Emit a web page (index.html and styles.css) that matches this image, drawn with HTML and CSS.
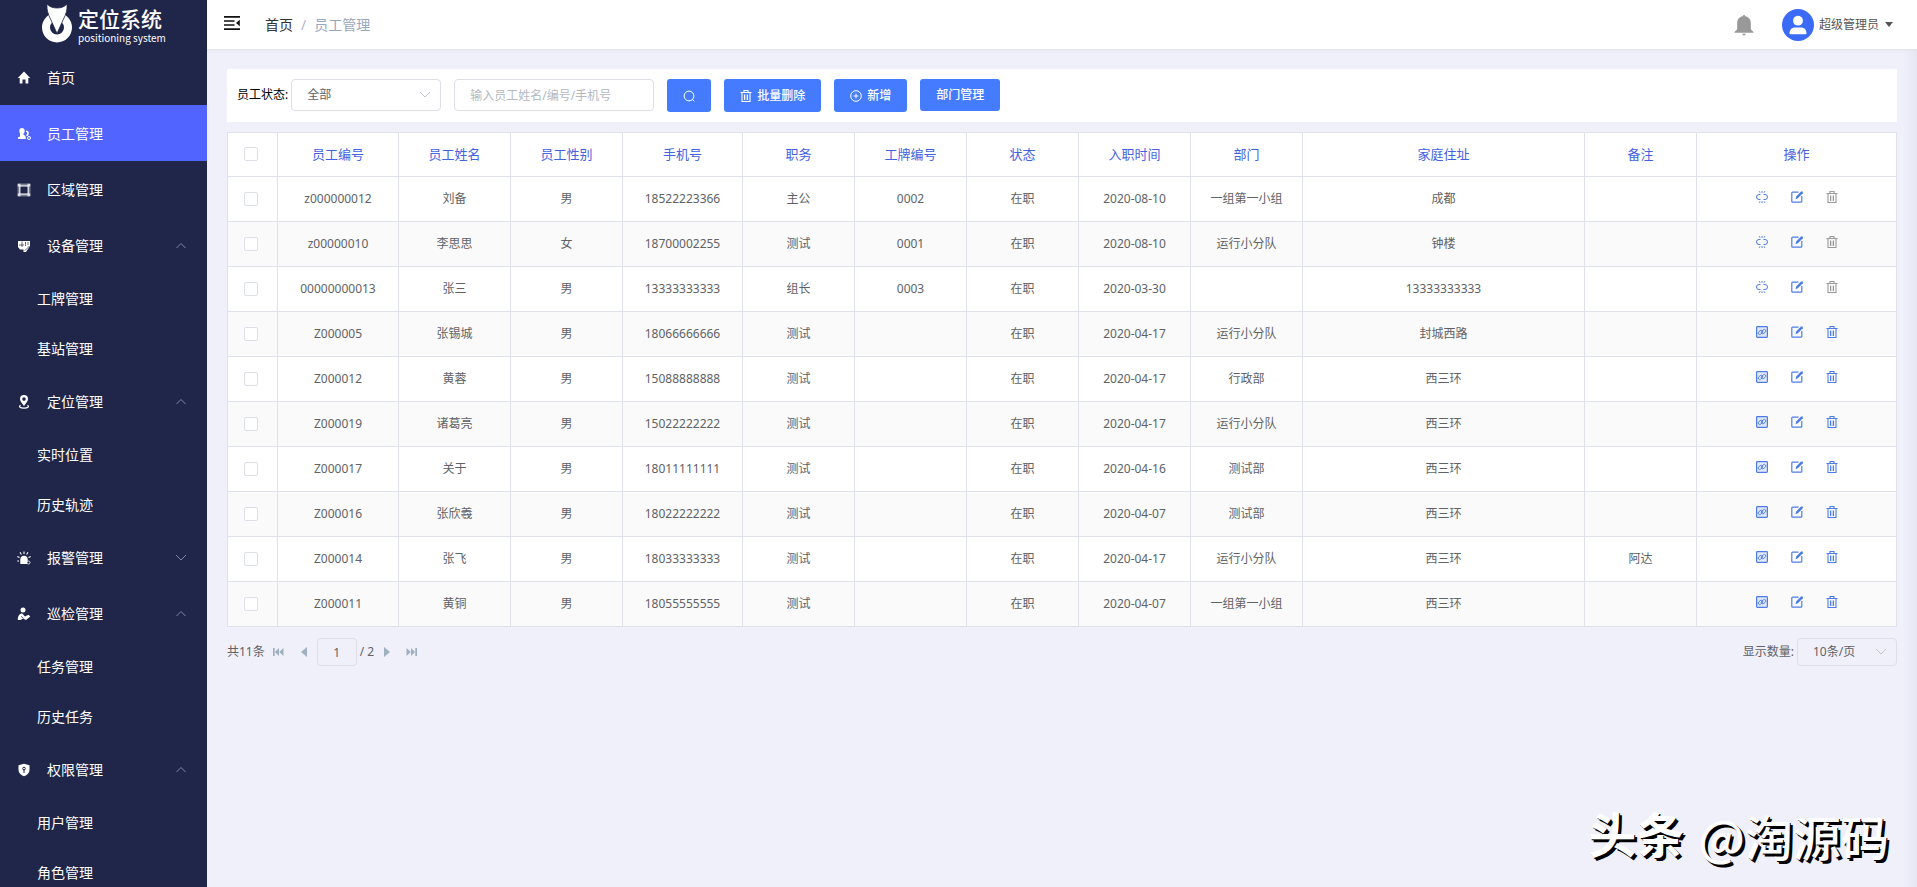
FILE: index.html
```html
<!DOCTYPE html>
<html lang="zh-CN">
<head>
<meta charset="UTF-8">
<meta name="viewport" content="width=device-width, initial-scale=1.0">
<title>定位系统 - 员工管理</title>
<link rel="stylesheet" href="styles.css">
</head>
<body>

<!-- Icons -->
<svg class="sprite" aria-hidden="true">
  <symbol id="i-up" viewBox="0 0 12 12"><path d="M1.500 8 6 3.500l4.500 4.500" fill="none" stroke="currentColor"/></symbol>
  <symbol id="i-down" viewBox="0 0 12 12"><path d="M1 3 6 8l5-5" fill="none" stroke="currentColor"/></symbol>
  <symbol id="i-home" viewBox="0 0 14 14"><path d="M7 .5.8 7h1.900v5.500h2.800V8.500h3v4h2.800V7h1.900z" fill="currentColor"/></symbol>
  <symbol id="i-staff" viewBox="0 0 14 14"><path d="M5 1c1.700 0 2.700 1.200 2.700 2.700 0 1.300-.6 2.200-1.200 2.900v1.200c1.200.7 2.300 1.200 2.300 3v1.200H1v-1.200c0-.9 1-1 2-1.300V6.600C2.900 5.900 2.300 5 2.300 3.700 2.300 2.200 3.300 1 5 1z" fill="currentColor"/><path d="M9 4.200c1.400 0 2 1 2 2s-.4 1.500-.8 1.900v.8" fill="none" stroke="currentColor" stroke-width="1.600"/><circle cx="12" cy="11" r="1.500" fill="none" stroke="currentColor"/></symbol>
  <symbol id="i-area" viewBox="0 0 14 14"><path d="M2.800 2.800h8.400v8.400H2.800z" fill="none" stroke="currentColor" stroke-width="1.200"/><path d="M1.200 1.200h11.600v11.600H1.200z" fill="none" stroke="currentColor" opacity=".6"/><path d="M.7.7h2.800v2.800H.7zM10.500.7h2.800v2.800h-2.800zM.7 10.500h2.800v2.800H.7zM10.500 10.500h2.800v2.800h-2.800z" fill="currentColor" opacity=".7"/></symbol>
  <symbol id="i-device" viewBox="0 0 14 14"><path d="M1 2h12v5L9 13H6.500V10.500H3L1 8z" fill="currentColor"/><path d="M2 6h5M5 2.500V8M8.500 3v4M11 3v3M8 11.500l4.500-4.500" fill="none" stroke="#20264a" stroke-width=".7"/></symbol>
  <symbol id="i-place" viewBox="0 0 14 14"><path fill-rule="evenodd" d="M7 0a4 4 0 0 1 4 4c0 2.600-2.400 4.500-4 7-1.600-2.500-4-4.400-4-7a4 4 0 0 1 4-4zm0 2.300a1.800 1.800 0 1 0 0 3.600 1.800 1.800 0 0 0 0-3.600z" fill="currentColor"/><path d="M3.500 10.200c-2 1.500-.5 2.900 3.500 2.900s5.500-1.400 3.500-2.900" fill="none" stroke="currentColor" stroke-width="1.300"/></symbol>
  <symbol id="i-alarm" viewBox="0 0 14 14"><path d="M3.300 13V8.500a3.700 3.700 0 0 1 7.400 0V13z" fill="currentColor"/><path d="M7 .5v2.500M3 1.300l1.400 2.200M11 1.300 9.600 3.500M.3 5.500l2.200.9M13.700 5.500l-2.200.9M.3 10h1.700" fill="none" stroke="currentColor" stroke-width="1.100"/><circle cx="11.500" cy="11.500" r="1.500" fill="#20264a" stroke="currentColor" stroke-width=".8"/></symbol>
  <symbol id="i-patrol" viewBox="0 0 14 14"><circle cx="6" cy="3" r="2.500" fill="currentColor"/><path d="M.8 13c0-4 1.500-6.500 4.500-6.500L8 9.500l3.500-1.800 1.800 1.800L9 13 6 11.500 3.500 13z" fill="currentColor"/><path d="M4 9.300l2.500 2" stroke="#20264a" stroke-width=".7"/></symbol>
  <symbol id="i-shield" viewBox="0 0 14 14"><path d="M7 .8 12.500 2.300V7c0 3-2.300 5-5.500 6.300C3.800 12 1.500 10 1.500 7V2.300z" fill="currentColor"/><circle cx="7" cy="5.500" r="1.300" fill="none" stroke="#20264a"/><path d="M7 6.500V10" stroke="#20264a"/></symbol>
  <symbol id="i-fold" viewBox="0 0 16 14"><path d="M0 .9h16M0 5h10.500M0 9h10.500M0 13.100h16" stroke="currentColor" stroke-width="1.600"/><path d="M15.800 3.800v6.400L12 7z" fill="currentColor"/></symbol>
  <symbol id="i-bell" viewBox="0 0 20 22"><path d="M8.800 2.200a1.200 1.200 0 0 1 2.400 0c3.600.7 5.600 3.300 5.600 6.800v6.500l2.700 2.500v.8H.5V18l2.700-2.500V9c0-3.500 2-6.100 5.600-6.800zM7.800 19.800h4.400L10 21.800z" fill="currentColor"/></symbol>
  <symbol id="i-user" viewBox="0 0 32 32"><circle cx="16" cy="16" r="16" fill="#3b6bf6"/><circle cx="16" cy="11.700" r="4.900" fill="#fff"/><path d="M7.500 24.500c0-4 2.500-6 5.500-6h6c3 0 5.500 2 5.500 6 0 .5-.3.700-.8.700H8.300c-.5 0-.8-.2-.8-.7z" fill="#fff"/></symbol>
  <symbol id="i-search" viewBox="0 0 12 12"><path d="M9.300 9.300 11.300 11.300" stroke="currentColor"/><circle cx="6" cy="6" r="4.900" fill="none" stroke="currentColor"/></symbol>
  <symbol id="i-trash" viewBox="0 0 12 12"><path d="M.5 2.500h11M4 2.500v-2h4v2M2 2.500v9h8v-9M4.500 4.500V10M7.500 4.500V10" fill="none" stroke="currentColor" stroke-width="1.100"/><path d="M6 4.500V10" stroke="currentColor" opacity=".5"/></symbol>
  <symbol id="i-plus" viewBox="0 0 12 12"><circle cx="6" cy="6" r="5.300" fill="none" stroke="currentColor"/><path d="M6 3.500v5M3.500 6h5" stroke="currentColor"/></symbol>
  <symbol id="i-edit" viewBox="0 0 12 12"><path d="M7.500 1.200H1.600a.8.800 0 0 0-.8.800v8.400c0 .4.400.8.800.8H10c.4 0 .8-.4.800-.8V5" fill="none" stroke="currentColor" stroke-width="1.200"/><path d="M11.800.5v1.700L6.800 7.200 4.500 8.200 5.200 5.500 10 .5z" fill="currentColor"/></symbol>
  <symbol id="i-unbind" viewBox="0 0 12 12"><path d="M4.500 3.500H3a2.500 2.500 0 0 0 0 5h1.500M7.500 3.500H9a2.500 2.500 0 0 1 0 5H7.500M6 0v1.800M3.200.2l.8 1.500M8.800.2 8 1.700M6 12v-1.800M3.200 11.800l.8-1.500M8.800 11.800 8 10.300" fill="none" stroke="currentColor"/></symbol>
  <symbol id="i-bind" viewBox="0 0 12 12"><rect x=".6" y=".6" width="10.800" height="10.800" rx=".8" fill="currentColor" fill-opacity=".15" stroke="currentColor" stroke-width="1.200"/><g fill="none" stroke="currentColor" stroke-width=".9"><rect x="1.900" y="4.900" width="5" height="3" rx="1.500" transform="rotate(-40 4.400 6.400)"/><rect x="5.100" y="4.100" width="5" height="3" rx="1.500" transform="rotate(-40 7.600 5.600)"/></g></symbol>
  <symbol id="i-first" viewBox="0 0 11 10"><path d="M0 1h1.700v8H0zM6 1v8L1.900 5zM10.500 1v8L6.200 5z" fill="currentColor"/></symbol>
  <symbol id="i-prev" viewBox="0 0 6 12"><path d="M6 1v10L0 6z" fill="currentColor"/></symbol>
</svg>

<div class="app">
  <aside class="sidebar">
    <a class="logo" href="#">
      <svg class="logo-mark" viewBox="0 0 32 40"><circle cx="16" cy="23.500" r="11" fill="none" stroke="#fff" stroke-width="8"/><path d="M6 0c3 3 6 4 10 4 4 0 7-1 10-4 .5 6-1 10-3.500 15L16 29.500 9.500 15C7 10 5.500 6 6 0z" fill="#fff" stroke="#20264a" stroke-width=".8"/></svg>
      <span class="logo-text">
        <strong>定位系统</strong>
        <small>positioning system</small>
      </span>
    </a>
    <nav class="menu">
      <a class="menu-item" href="#"><svg class="menu-icon"><use href="#i-home"/></svg>首页</a>
      <a class="menu-item active" href="#"><svg class="menu-icon"><use href="#i-staff"/></svg>员工管理</a>
      <a class="menu-item" href="#"><svg class="menu-icon"><use href="#i-area"/></svg>区域管理</a>
      <a class="menu-item" href="#"><svg class="menu-icon"><use href="#i-device"/></svg>设备管理<svg class="menu-arrow"><use href="#i-up"/></svg></a>
      <a class="menu-sub" href="#">工牌管理</a>
      <a class="menu-sub" href="#">基站管理</a>
      <a class="menu-item" href="#"><svg class="menu-icon"><use href="#i-place"/></svg>定位管理<svg class="menu-arrow"><use href="#i-up"/></svg></a>
      <a class="menu-sub" href="#">实时位置</a>
      <a class="menu-sub" href="#">历史轨迹</a>
      <a class="menu-item" href="#"><svg class="menu-icon"><use href="#i-alarm"/></svg>报警管理<svg class="menu-arrow"><use href="#i-down"/></svg></a>
      <a class="menu-item" href="#"><svg class="menu-icon"><use href="#i-patrol"/></svg>巡检管理<svg class="menu-arrow"><use href="#i-up"/></svg></a>
      <a class="menu-sub" href="#">任务管理</a>
      <a class="menu-sub" href="#">历史任务</a>
      <a class="menu-item" href="#"><svg class="menu-icon"><use href="#i-shield"/></svg>权限管理<svg class="menu-arrow"><use href="#i-up"/></svg></a>
      <a class="menu-sub" href="#">用户管理</a>
      <a class="menu-sub" href="#">角色管理</a>
    </nav>
  </aside>

  <div class="main">
    <header class="navbar">
      <button class="plain fold" aria-label="折叠菜单"><svg><use href="#i-fold"/></svg></button>
      <nav class="breadcrumb">
        <a href="#">首页</a><span class="sep">/</span><span>员工管理</span>
      </nav>
      <button class="plain bell" aria-label="消息"><svg><use href="#i-bell"/></svg></button>
      <button class="plain user"><svg><use href="#i-user"/></svg>超级管理员<span class="caret"></span></button>
    </header>

    <main class="content">
      <form class="toolbar">
        <label for="status">员工状态:</label>
        <div class="select status">
          <select id="status"><option>全部</option><option>在职</option><option>离职</option></select>
          <svg><use href="#i-down"/></svg>
        </div>
        <input class="search" type="text" aria-label="搜索员工" placeholder="输入员工姓名/编号/手机号">
        <button class="btn btn-icon" type="button" aria-label="搜索"><svg><use href="#i-search"/></svg></button>
        <button class="btn btn-icon" type="button"><svg><use href="#i-trash"/></svg>批量删除</button>
        <button class="btn btn-icon" type="button"><svg><use href="#i-plus"/></svg>新增</button>
        <button class="btn" type="button">部门管理</button>
      </form>

      <table class="table">
        <colgroup>
          <col class="w-check"><col class="w-code"><col class="w-base"><col class="w-base"><col class="w-phone">
          <col class="w-base"><col class="w-base"><col class="w-base"><col class="w-base"><col class="w-base">
          <col><col class="w-base"><col class="w-action">
        </colgroup>
        <thead>
          <tr>
            <th><input type="checkbox" aria-label="全选"></th>
            <th>员工编号</th><th>员工姓名</th><th>员工性别</th><th>手机号</th><th>职务</th><th>工牌编号</th>
            <th>状态</th><th>入职时间</th><th>部门</th><th>家庭住址</th><th>备注</th><th>操作</th>
          </tr>
        </thead>
        <tbody id="rows"></tbody>
      </table>

      <div class="pagination">
        <span>共11条</span>
        <button class="plain pg-edge" aria-label="第一页"><svg><use href="#i-first"/></svg></button>
        <button class="plain pg-step" aria-label="上一页"><svg><use href="#i-prev"/></svg></button>
        <input class="page" type="text" value="1" aria-label="页码">
        <span>/ 2</span>
        <button class="plain pg-step next" aria-label="下一页"><svg><use href="#i-prev"/></svg></button>
        <button class="plain pg-edge next" aria-label="最后一页"><svg><use href="#i-first"/></svg></button>
        <label class="size-label" for="size">显示数量:</label>
        <div class="select size">
          <select id="size"><option>10条/页</option><option>20条/页</option></select>
          <svg><use href="#i-down"/></svg>
        </div>
      </div>
    </main>
  </div>
</div>

<div class="watermark"><b>头条</b><span>@淘源码</span></div>

<script src="script.js"></script>
</body>
</html>
```
FILE: styles.css
```css
* { box-sizing: border-box; }
body { margin: 0; font-family: "Noto Sans", "Noto Sans CJK SC", sans-serif; font-size: 12px; line-height: 20px; color: #606266; background: #f0f0fa; }
a { color: inherit; text-decoration: none; }
button, input, select { font: inherit; color: inherit; }
button { cursor: pointer; }
.sprite { display: none; }
.plain { display: flex; align-items: center; padding: 0; border: 0; background: none; }

.app { display: flex; height: 100vh; overflow: hidden; }

/* Sidebar */
.sidebar { flex: none; width: 207px; background: #20264a; color: #fff; overflow: hidden; }
.logo { display: flex; gap: 5px; height: 49px; padding: 4px 0 0 41px; }
.logo-mark { width: 32px; height: 40px; }
.logo-text { display: flex; flex-direction: column; padding-top: 2px; }
.logo-text strong { font-size: 21px; line-height: 26px; font-weight: 500; }
.logo-text small { font-family: "Noto Sans CJK SC", sans-serif; font-size: 10px; line-height: 12px; white-space: nowrap; }
.menu { display: flex; flex-direction: column; font-size: 14px; }
.menu-item { display: flex; align-items: center; height: 56px; padding: 2px 20px 0 17px; }
.menu-item.active { background: #5264ff; }
.menu-icon { width: 14px; height: 14px; margin-right: 16px; }
.menu-arrow { width: 12px; height: 12px; margin-left: auto; color: #8186a0; }
.menu-sub { height: 50px; padding: 1px 0 0 37px; line-height: 50px; }

/* Header */
.main { flex: 1; min-width: 0; overflow: hidden; background: linear-gradient(to left, #e6e6f2, #f0f0fa 14px); }
.navbar { display: flex; align-items: center; height: 49px; padding: 0 24px 0 17px; background: #fff; box-shadow: 0 1px 4px #dcdfea; }
.fold { color: #111; }
.fold svg { width: 16px; height: 14px; margin-bottom: 3px; }
.breadcrumb { display: flex; margin-left: 25px; font-size: 14px; color: #97a8be; }
.breadcrumb a { color: #303133; }
.breadcrumb .sep { margin: 0 8px; color: #b0b8c4; }
.bell { margin-left: auto; color: #999; }
.bell svg { width: 20px; height: 22px; }
.user { margin-left: 28px; color: #555; }
.user svg { width: 32px; height: 32px; margin-right: 5px; }
.caret { margin-left: 6px; border: 4px solid transparent; border-top: 5px solid #555; border-bottom: 0; }

/* Filters */
.content { padding: 20px; }
.toolbar { display: flex; align-items: flex-start; height: 53px; padding: 10px 10px 0; margin-bottom: 10px; background: #fff; color: #000; }
.toolbar label { line-height: 32px; }
.select { position: relative; color: #606266; }
.select select { width: 100%; height: 100%; padding: 0 15px; border: 1px solid #dcdfe6; border-radius: 4px; background: transparent; appearance: none; }
.select svg { position: absolute; top: 50%; right: 10px; width: 12px; height: 12px; margin-top: -6px; color: #c0c4cc; pointer-events: none; }
.status { width: 150px; height: 32px; margin-left: 3px; }
.search { width: 200px; height: 32px; margin: 0 13px; padding: 0 15px; border: 1px solid #dcdfe6; border-radius: 4px; }
.search::placeholder { color: #b4b8c0; }
.btn { display: flex; align-items: center; gap: 5px; height: 32px; margin-right: 13px; padding: 0 16px; border: 0; border-radius: 3px; background: #457cff; color: #fff; font-weight: 500; }
.btn-icon { height: 33px; }
.btn svg { width: 12px; height: 12px; }

/* Table */
.table { width: 100%; table-layout: fixed; border-spacing: 0; border: solid #dfe2ea; border-width: 1px 0 0 1px; background: #fff; text-align: center; }
.table th, .table td { height: 45px; padding: 0; border: solid #dfe2ea; border-width: 0 1px 1px 0; }
.table th { height: 44px; padding-bottom: 2px; font-size: 13px; font-weight: 400; color: #4462e0; }
.table tbody tr:nth-child(even) { background: #fafafa; }
.table input { display: block; width: 14px; height: 14px; margin: 0 0 0 16px; border: 1px solid #dcdfe6; border-radius: 2px; background: #fff; appearance: none; }
.w-check { width: 50px; }
.w-code { width: 121px; }
.w-base { width: 112px; }
.w-phone { width: 120px; }
.w-action { width: 200px; }
.actions { display: flex; justify-content: center; gap: 23px; padding-bottom: 5px; color: #4d7ce8; }
.actions svg { width: 12px; height: 12px; }
.actions .disabled { color: #999; }

/* Pagination */
.pagination { display: flex; align-items: center; padding-top: 11px; }
.pagination .plain { color: #9fb0bf; }
.pg-edge svg { width: 11px; height: 10px; }
.pg-step svg { width: 6px; height: 12px; }
.pg-edge { margin-left: 8px; }
.pg-step { margin: 0 10px 0 17px; }
.pg-step.next { margin: 0 8px 0 10px; }
.next { transform: rotate(180deg); }
.page { width: 40px; height: 28px; margin-right: 3px; padding: 0; border: 1px solid #dcdfe6; border-radius: 4px; background: transparent; text-align: center; }
.size-label { margin-left: auto; }
.size { width: 100px; height: 28px; margin-left: 3px; }

.watermark { position: absolute; right: 28px; bottom: 20px; display: flex; gap: 14px; font-family: "Noto Sans CJK SC", sans-serif; font-size: 48px; line-height: 64px; color: #fff; text-shadow: 1px 1px 0 #000, 3px 3px 0 #000; }
.watermark b { padding-bottom: 4px; line-height: 58px; font-weight: 700; }
.watermark span { font-weight: 500; }
```
FILE: script.js
```js
// code, name, sex, phone, job, card, date, department, address, remark
const staff = [
  ["z000000012", "刘备", "男", "18522223366", "主公", "0002", "2020-08-10", "一组第一小组", "成都", ""],
  ["z00000010", "李思思", "女", "18700002255", "测试", "0001", "2020-08-10", "运行小分队", "钟楼", ""],
  ["00000000013", "张三", "男", "13333333333", "组长", "0003", "2020-03-30", "", "13333333333", ""],
  ["Z000005", "张锡城", "男", "18066666666", "测试", "", "2020-04-17", "运行小分队", "封城西路", ""],
  ["Z000012", "黄蓉", "男", "15088888888", "测试", "", "2020-04-17", "行政部", "西三环", ""],
  ["Z000019", "诸葛亮", "男", "15022222222", "测试", "", "2020-04-17", "运行小分队", "西三环", ""],
  ["Z000017", "关于", "男", "18011111111", "测试", "", "2020-04-16", "测试部", "西三环", ""],
  ["Z000016", "张欣羲", "男", "18022222222", "测试", "", "2020-04-07", "测试部", "西三环", ""],
  ["Z000014", "张飞", "男", "18033333333", "测试", "", "2020-04-17", "运行小分队", "西三环", "阿达"],
  ["Z000011", "黄铜", "男", "18055555555", "测试", "", "2020-04-07", "一组第一小组", "西三环", ""]
];

const icon = (name, label, cls = "") =>
  `<button class="plain ${cls}" aria-label="${label}"><svg><use href="#i-${name}"/></svg></button>`;

document.getElementById("rows").innerHTML = staff.map(person => {
  const cells = [...person];
  cells.splice(6, 0, "在职");
  // staff with a card can be unbound but not deleted
  const hasCard = person[5] !== "";
  return `<tr>
    <td><input type="checkbox" aria-label="选择${person[1]}"></td>
    ${cells.map(text => `<td>${text}</td>`).join("")}
    <td><div class="actions">
      ${hasCard ? icon("unbind", "解绑") : icon("bind", "绑定")}
      ${icon("edit", "编辑")}
      ${icon("trash", "删除", hasCard ? "disabled" : "")}
    </div></td>
  </tr>`;
}).join("");
```
